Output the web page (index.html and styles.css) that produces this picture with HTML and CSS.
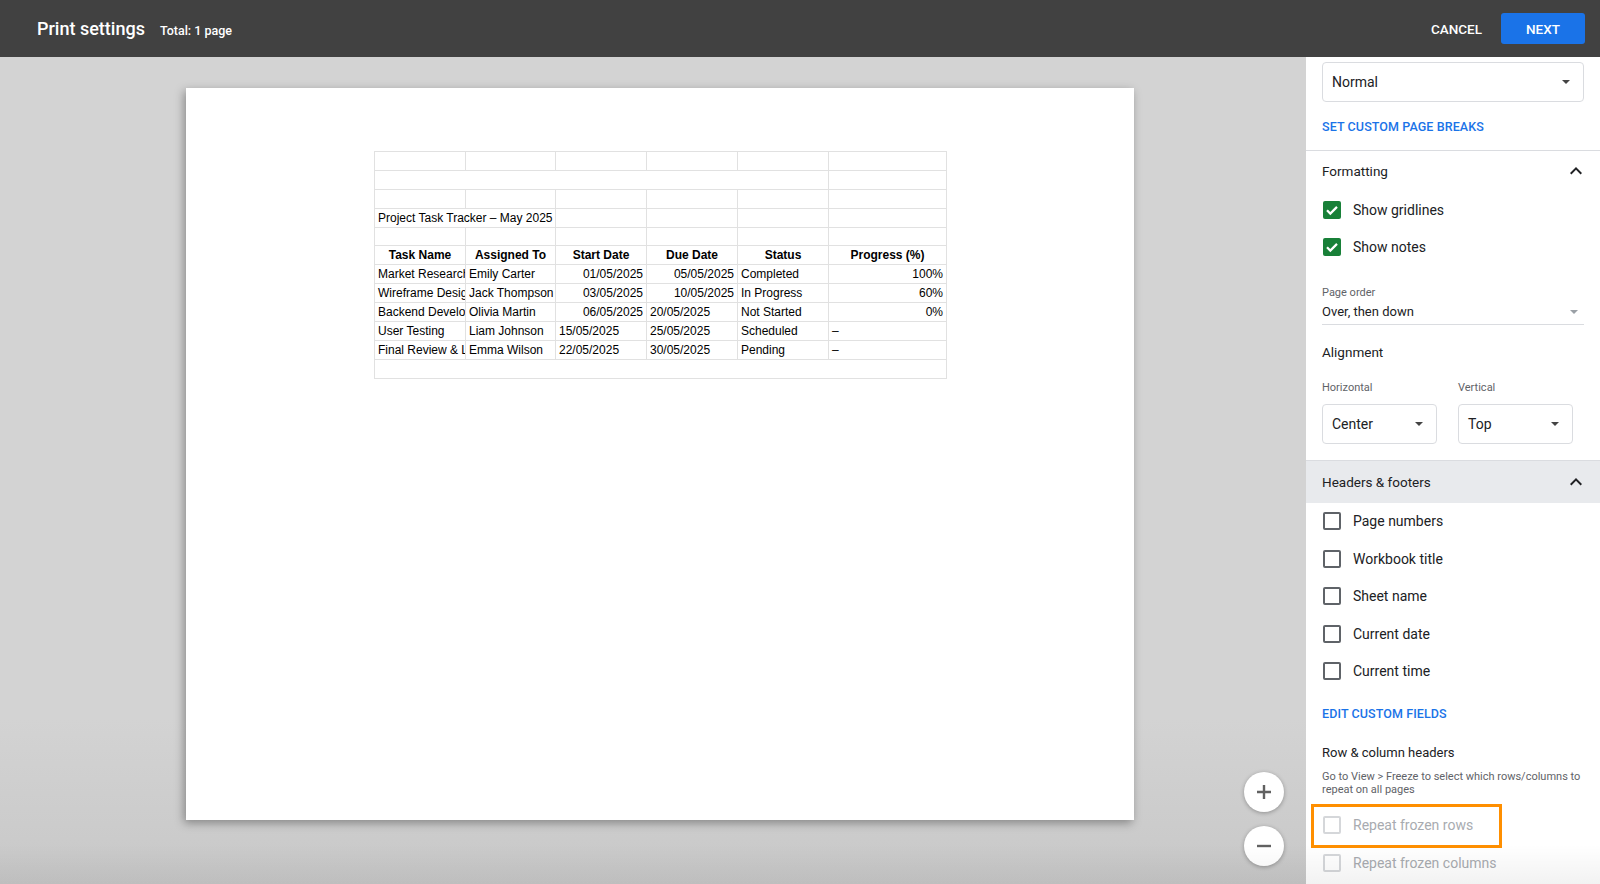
FILE: index.html
```html
<!DOCTYPE html>
<html lang="en">
<head>
  <meta charset="UTF-8" />
  <title>Print settings</title>
  <link rel="stylesheet" href="styles.css">
</head>
<body>
  <header class="topbar">
    <div class="title-group">
      <h1 class="title">Print settings</h1>
      <span class="total">Total: 1 page</span>
    </div>
    <div class="actions">
      <button class="btn-cancel">CANCEL</button>
      <button class="btn-next">NEXT</button>
    </div>
  </header>

  <main class="workspace">
    <section class="preview">
      <div class="page">
        <table class="sheet">
          <colgroup>
            <col style="width:91px"><col style="width:90px"><col style="width:91px">
            <col style="width:91px"><col style="width:91px"><col style="width:118px">
          </colgroup>
          <tr><td></td><td></td><td></td><td></td><td></td><td></td></tr>
          <tr><td colspan="5"></td><td></td></tr>
          <tr><td></td><td></td><td></td><td></td><td></td><td></td></tr>
          <tr><td colspan="2">Project Task Tracker – May 2025</td><td></td><td></td><td></td><td></td></tr>
          <tr><td></td><td></td><td></td><td></td><td></td><td></td></tr>
          <tr class="head">
            <td>Task Name</td><td>Assigned To</td><td>Start Date</td>
            <td>Due Date</td><td>Status</td><td>Progress (%)</td>
          </tr>
          <tr>
            <td>Market Research</td><td>Emily Carter</td><td class="num">01/05/2025</td>
            <td class="num">05/05/2025</td><td>Completed</td><td class="num">100%</td>
          </tr>
          <tr>
            <td>Wireframe Design</td><td>Jack Thompson</td><td class="num">03/05/2025</td>
            <td class="num">10/05/2025</td><td>In Progress</td><td class="num">60%</td>
          </tr>
          <tr>
            <td>Backend Development</td><td>Olivia Martin</td><td class="num">06/05/2025</td>
            <td>20/05/2025</td><td>Not Started</td><td class="num">0%</td>
          </tr>
          <tr>
            <td>User Testing</td><td>Liam Johnson</td><td>15/05/2025</td>
            <td>25/05/2025</td><td>Scheduled</td><td>–</td>
          </tr>
          <tr>
            <td>Final Review &amp; Launch</td><td>Emma Wilson</td><td>22/05/2025</td>
            <td>30/05/2025</td><td>Pending</td><td>–</td>
          </tr>
          <tr><td colspan="6"></td></tr>
        </table>
      </div>

      <div class="zoom-controls">
        <button class="zoom-btn" title="Zoom in">
          <svg width="16" height="16" viewBox="0 0 16 16"><path d="M8 1v14M1 8h14" stroke="#616161" stroke-width="2.4"/></svg>
        </button>
        <button class="zoom-btn" title="Zoom out">
          <svg width="16" height="16" viewBox="0 0 16 16"><path d="M1 8h14" stroke="#616161" stroke-width="2.4"/></svg>
        </button>
      </div>
    </section>

    <aside class="sidebar">
      <div class="sb-block">
        <div class="select">
          <span>Normal</span><span class="caret"></span>
        </div>
        <div class="link-row"><a class="link-btn">SET CUSTOM PAGE BREAKS</a></div>
      </div>

      <div class="section-head">
        <span>Formatting</span>
        <svg class="chevron" width="24" height="24" viewBox="0 0 24 24"><path d="M7.41 15.41L12 10.83l4.59 4.58L18 14l-6-6-6 6z" fill="#202124"/></svg>
      </div>

      <div class="sb-block">
        <div class="check-row">
          <span class="box checked"><svg width="18" height="18" viewBox="0 0 18 18"><path d="M4 9.3l3.3 3.3L14 5.9" fill="none" stroke="#fff" stroke-width="2.2"/></svg></span>
          <span>Show gridlines</span>
        </div>
        <div class="check-row">
          <span class="box checked"><svg width="18" height="18" viewBox="0 0 18 18"><path d="M4 9.3l3.3 3.3L14 5.9" fill="none" stroke="#fff" stroke-width="2.2"/></svg></span>
          <span>Show notes</span>
        </div>

        <div class="field">
          <div class="field-label">Page order</div>
          <div class="field-value"><span>Over, then down</span><span class="caret light"></span></div>
        </div>

        <div class="sub-head">Alignment</div>
        <div class="align-row">
          <div class="align-col">
            <div class="align-label">Horizontal</div>
            <div class="select"><span>Center</span><span class="caret"></span></div>
          </div>
          <div class="align-col">
            <div class="align-label">Vertical</div>
            <div class="select"><span>Top</span><span class="caret"></span></div>
          </div>
        </div>
      </div>

      <div class="section-head shaded">
        <span>Headers &amp; footers</span>
        <svg class="chevron" width="24" height="24" viewBox="0 0 24 24"><path d="M7.41 15.41L12 10.83l4.59 4.58L18 14l-6-6-6 6z" fill="#202124"/></svg>
      </div>

      <div class="sb-block">
        <div class="check-row"><span class="box"></span><span>Page numbers</span></div>
        <div class="check-row"><span class="box"></span><span>Workbook title</span></div>
        <div class="check-row"><span class="box"></span><span>Sheet name</span></div>
        <div class="check-row"><span class="box"></span><span>Current date</span></div>
        <div class="check-row"><span class="box"></span><span>Current time</span></div>

        <div class="link-row tall"><a class="link-btn">EDIT CUSTOM FIELDS</a></div>

        <div class="rc-head">Row &amp; column headers</div>
        <p class="hint">Go to View &gt; Freeze to select which rows/columns to repeat on all pages</p>

        <div class="check-row disabled marked">
          <span class="box"></span><span>Repeat frozen rows</span>
          <span class="highlight"></span>
        </div>
        <div class="check-row disabled"><span class="box"></span><span>Repeat frozen columns</span></div>
      </div>
    </aside>
  </main>

  <div class="bottom-fade"></div>
</body>
</html>
```

FILE: styles.css
```css
* {
  box-sizing: border-box;
}

html, body {
  margin: 0;
  height: 100%;
  overflow: hidden;
}

body {
  font-family: Roboto, "Noto Sans", Arial, sans-serif;
  color: #202124;
  background: #d2d2d2;
  position: relative;
}

/* barra superior */
.topbar {
  height: 57px;
  background: #414141;
  display: flex;
  align-items: center;
  justify-content: space-between;
  padding: 0 15px 0 37px;
}

.title-group {
  display: flex;
  align-items: baseline;
}

.title {
  margin: 0;
  font-size: 18px;
  font-weight: 500;
  color: #fff;
}

.total {
  margin-left: 15px;
  font-size: 12.5px;
  font-weight: 500;
  color: #fff;
}

.actions {
  display: flex;
  align-items: center;
}

.actions button {
  font-family: Roboto, Arial, sans-serif;
  font-size: 13.5px;
  font-weight: 500;
  color: #fff;
  border: none;
  cursor: pointer;
}

.btn-cancel {
  background: none;
  padding: 0;
  margin-right: 19px;
}

.btn-next {
  width: 84px;
  height: 31px;
  background: #1a73e8;
  border-radius: 3px;
}

/* area principal */
.workspace {
  display: flex;
  height: 827px;
}

.preview {
  flex: 1;
  position: relative;
  padding: 31px 0 0 186px;
  background: linear-gradient(#d3d3d3 80%, #c8c8c8 100%);
}

.page {
  width: 948px;
  height: 732px;
  background: #fff;
  box-shadow: -2px 3px 9px rgba(0,0,0,0.35);
  padding: 63px 0 0 188px;
}

.sheet {
  border-collapse: collapse;
  table-layout: fixed;
  width: 572px;
  font-family: "Liberation Sans", Arial, sans-serif;
  font-size: 12px;
  color: #000;
}

.sheet td {
  height: 18.9px;
  padding: 0 3px 0 3px;
  border: 1px solid #e1e1e1;
  white-space: nowrap;
  overflow: hidden;
  vertical-align: middle;
  line-height: 16px;
}

.sheet .num {
  text-align: right;
}

.sheet .head td {
  font-weight: bold;
  text-align: center;
}

.zoom-controls {
  position: absolute;
  right: 22px;
  top: 715px;
  display: flex;
  flex-direction: column;
  gap: 14px;
}

.zoom-btn {
  width: 40px;
  height: 40px;
  border-radius: 50%;
  border: none;
  background: #fff;
  box-shadow: 0 1px 4px rgba(0,0,0,0.3);
  display: flex;
  align-items: center;
  justify-content: center;
  padding: 0;
}

/* painel lateral */
.sidebar {
  width: 294px;
  background: #fff;
  padding-top: 5px;
  overflow: hidden;
}

.sb-block {
  padding: 0 16px;
}

.select {
  height: 40px;
  border: 1px solid #dadce0;
  border-radius: 4px;
  display: flex;
  align-items: center;
  justify-content: space-between;
  padding: 0 13px 0 9px;
  font-size: 14px;
}

.caret {
  width: 0;
  height: 0;
  border-left: 4px solid transparent;
  border-right: 4px solid transparent;
  border-top: 4px solid #444;
}

.caret.light {
  border-top-color: #9aa0a6;
  margin-right: 6px;
}

.link-row {
  height: 48px;
  display: flex;
  align-items: center;
}

.link-row.tall {
  height: 47px;
}

.link-btn {
  font-size: 12.5px;
  font-weight: 500;
  color: #1a73e8;
  letter-spacing: 0.1px;
  cursor: pointer;
}

.section-head {
  height: 41px;
  border-top: 1px solid #dadce0;
  display: flex;
  align-items: center;
  justify-content: space-between;
  padding: 0 12px 0 16px;
  font-size: 13.5px;
}

.section-head.shaded {
  height: 43px;
  margin-top: 16px;
  background: #e8eaed;
}

.check-row {
  height: 37.4px;
  display: flex;
  align-items: center;
  font-size: 14px;
  position: relative;
}

.box {
  width: 18px;
  height: 18px;
  border: 2px solid #5f6368;
  border-radius: 2px;
  margin: 0 12px 0 1px;
  flex-shrink: 0;
}

.box.checked {
  border: none;
  background: #188038;
}

.box svg {
  display: block;
}

.check-row.disabled {
  color: #a8abb0;
}

.check-row.disabled .box {
  border-color: #d5d7da;
}

.highlight {
  position: absolute;
  left: -11px;
  top: -3px;
  width: 191px;
  height: 44px;
  border: 3px solid #ff8f00;
}

.field {
  padding-top: 20px;
}

.field-label {
  font-size: 11px;
  line-height: 14px;
  color: #5f6368;
}

.field-value {
  height: 25px;
  border-bottom: 1px solid #dadce0;
  display: flex;
  align-items: center;
  justify-content: space-between;
  font-size: 13px;
}

.sub-head {
  height: 54px;
  display: flex;
  align-items: center;
  font-size: 13.5px;
}

.align-row {
  display: flex;
  gap: 21px;
}

.align-col {
  width: 115px;
}

.align-label {
  font-size: 11px;
  line-height: 18px;
  color: #5f6368;
  margin-bottom: 7px;
}

.rc-head {
  padding-top: 6px;
  line-height: 20px;
  font-size: 13px;
  margin-bottom: 7px;
}

.hint {
  margin: 0 0 11px;
  font-size: 11px;
  line-height: 13px;
  color: #5f6368;
}

.bottom-fade {
  position: absolute;
  left: 0;
  right: 0;
  bottom: 0;
  height: 40px;
  background: linear-gradient(rgba(0,0,0,0), rgba(0,0,0,0.05));
  pointer-events: none;
}
```
